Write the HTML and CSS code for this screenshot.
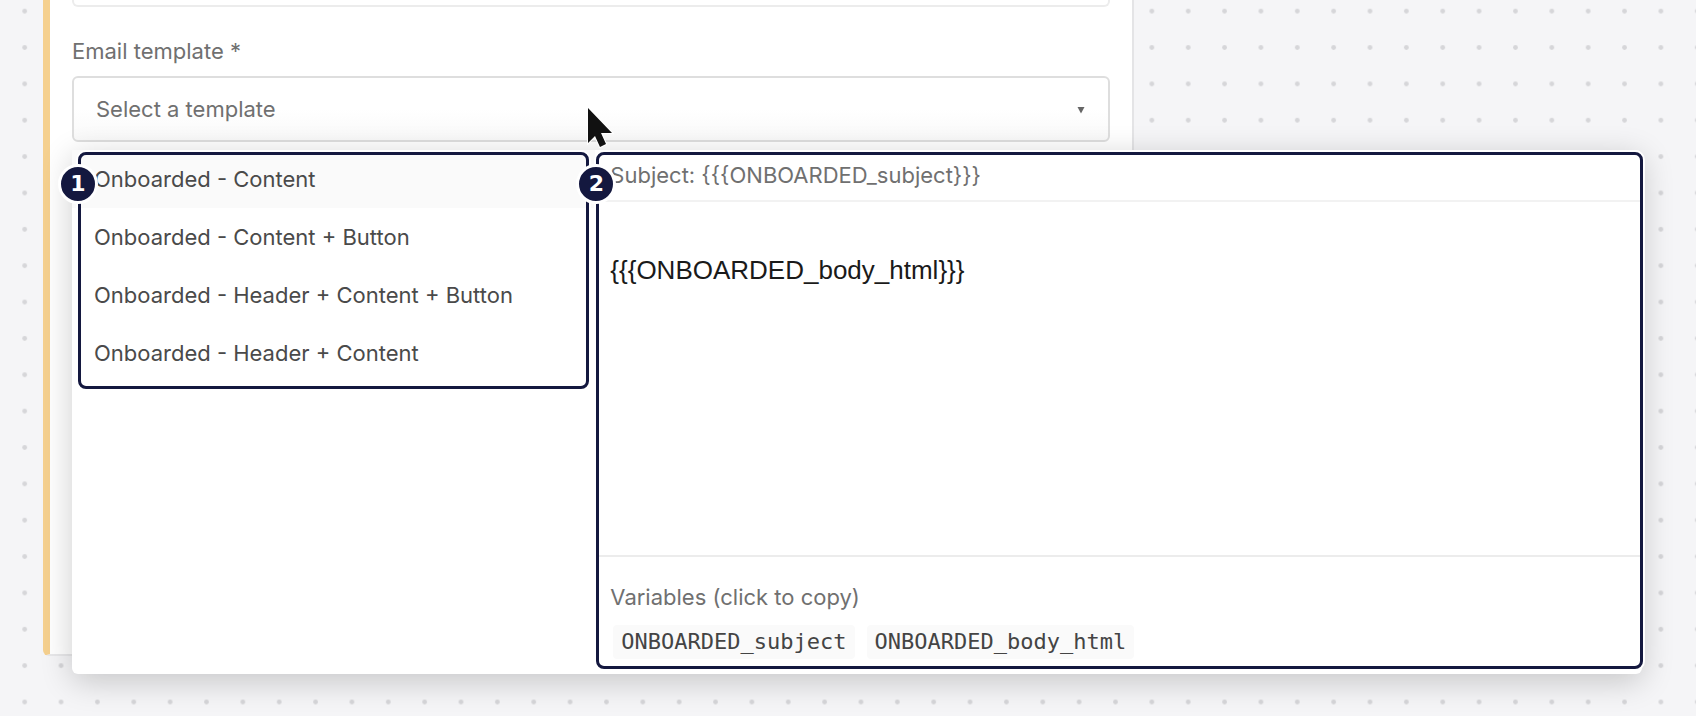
FILE: index.html
```html
<!DOCTYPE html>
<html lang="en">
<head>
    <meta charset="UTF-8">
    <meta name="viewport" content="width=device-width, initial-scale=1.0">
    <title>Email template</title>
    <link rel="stylesheet" href="styles.css">
</head>
<body>
    <main class="canvas">
        <svg class="dots" width="100%" height="100%" aria-hidden="true">
            <defs>
                <pattern id="dot" x="6.5" y="-7" width="36.36" height="36.36" patternUnits="userSpaceOnUse">
                    <circle cx="18.2" cy="18.2" r="2.4" fill="#d6d6d9"/>
                </pattern>
            </defs>
            <rect width="100%" height="100%" fill="url(#dot)"/>
        </svg>

        <form class="card">
            <input class="previous-field" type="text" aria-label="Previous field">
            <label class="label" for="template">Email template *</label>
            <div class="field">
                <select id="template" class="select">
                    <option>Select a template</option>
                </select>
                <svg class="arrow" width="8" height="8" viewBox="0 0 8 8" aria-hidden="true">
                    <path d="M0.5 1h7L4 7.5z" fill="#666"/>
                </svg>
                <svg class="cursor" width="28" height="42" viewBox="0 0 28 42" aria-hidden="true">
                    <path d="M2 2v35l7-7 5 11 6-3-5-11h11z" fill="#111" stroke="#fff" stroke-width="2" paint-order="stroke"/>
                </svg>

                <div class="dropdown">
                    <div class="list">
                        <button type="button" class="option active">Onboarded - Content</button>
                        <button type="button" class="option">Onboarded - Content + Button</button>
                        <button type="button" class="option">Onboarded - Header + Content + Button</button>
                        <button type="button" class="option">Onboarded - Header + Content</button>
                        <div class="callout callout-list"><span class="badge">1</span></div>
                    </div>
                    <div class="preview">
                        <div class="subject">Subject: {{{ONBOARDED_subject}}}</div>
                        <div class="message">{{{ONBOARDED_body_html}}}</div>
                        <div class="variables">
                            <div>Variables (click to copy)</div>
                            <div class="chips">
                                <button type="button" class="chip">ONBOARDED_subject</button>
                                <button type="button" class="chip">ONBOARDED_body_html</button>
                            </div>
                        </div>
                        <div class="callout callout-preview"><span class="badge">2</span></div>
                    </div>
                </div>
            </div>
        </form>
    </main>
</body>
</html>
```

FILE: styles.css
```css
* {
    box-sizing: border-box;
}

body {
    margin: 0;
    font-family: Inter, sans-serif;
    font-size: 22px;
    line-height: 28px;
    color: #707070;
}

button, select, input {
    font: inherit;
    color: inherit;
}

.canvas {
    position: relative;
    min-height: 100vh;
    padding: 0 48px 60px 43px;
    background-color: #f5f5f7;
    overflow: hidden;
}

.dots {
    position: absolute;
    inset: 0;
}

.card {
    position: relative;
    width: 68%;
    min-height: 656px;
    padding: 0 22px;
    background-color: #fff;
    border-left: 7px solid #f5d08f;
    border-right: 2px solid #e4e4e6;
    border-bottom: 2px solid #e8e8ea;
    border-radius: 0 0 4px 6px;
}

.previous-field {
    display: block;
    width: 100%;
    height: 7px;
    padding: 0;
    border: 2px solid #ececec;
    border-top: none;
    border-radius: 0 0 6px 6px;
}

.label {
    display: block;
    padding: 30px 0 11px;
}

.field {
    position: relative;
}

.select {
    display: block;
    width: 100%;
    height: 66px;
    padding: 0 22px;
    appearance: none;
    background: linear-gradient(#fff 50%, #f9f9f9);
    border: 2px solid #dedede;
    border-radius: 6px;
}

.arrow {
    position: absolute;
    right: 25px;
    top: 30px;
}

.cursor {
    position: absolute;
    left: 514px;
    top: 30px;
    z-index: 2;
}

.dropdown {
    position: absolute;
    top: 74px;
    left: 0;
    display: grid;
    grid-template-columns: 1fr 2fr;
    width: calc(100vw - 126px);
    min-height: 524px;
    background-color: #fff;
    border-radius: 6px;
    box-shadow: 0 7px 32px rgba(0, 0, 0, 0.2);
}

.list {
    position: relative;
    align-self: start;
    display: flex;
    flex-direction: column;
}

.option {
    height: 58px;
    padding: 0 22px;
    border: none;
    background: none;
    color: #4a4a4a;
    text-align: left;
}

.active {
    background-color: #fafafa;
}

.preview {
    position: relative;
    display: flex;
    flex-direction: column;
    padding-left: 2px;
}

.subject {
    padding: 11px 13px;
    border-bottom: 2px solid #f2f2f2;
}

.message {
    flex: 1;
    padding: 54px 13px;
    font-family: "Liberation Sans", Arial, sans-serif;
    font-size: 26px;
    color: #1a1a1a;
}

.variables {
    padding: 26px 13px 15px;
    border-top: 2px solid #ececec;
}

.chips {
    display: flex;
    gap: 12px;
    padding: 14px 3px 0;
}

.chip {
    height: 34px;
    padding: 0 8px;
    border: none;
    border-radius: 4px;
    background-color: #fafafa;
    font-family: "DejaVu Sans Mono", monospace;
    color: #444;
}

/* Numbered callouts drawn over the dropdown */
.callout {
    position: absolute;
    border: 3px solid #14183f;
    border-radius: 8px;
    box-shadow: 0 0 0 2px #fff;
    pointer-events: none;
}

.callout-list {
    inset: 2px 6px -7px 6px;
}

.callout-preview {
    inset: 2px -1px 5px 1px;
}

.badge {
    position: absolute;
    left: -23px;
    top: 9px;
    width: 40px;
    height: 40px;
    border: 3px solid #fff;
    border-radius: 50%;
    background-color: #14183f;
    color: #fff;
    font-family: "DejaVu Sans", sans-serif;
    font-size: 22px;
    font-weight: bold;
    line-height: 34px;
    text-align: center;
}
```
